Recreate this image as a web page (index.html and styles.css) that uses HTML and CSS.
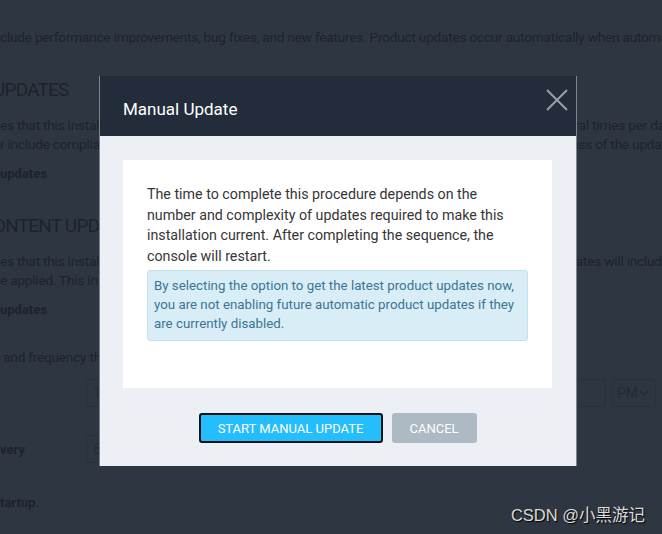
FILE: index.html
```html
<!DOCTYPE html>
<html lang="en">
<head>
<meta charset="utf-8">
<title>Manual Update</title>
<link rel="stylesheet" href="styles.css">
</head>
<body>
<main class="page">
  <p class="line l0">ty that this installation uses to keep the y protection current. / The computer ales and security provides the compliance reports</p>
  <p class="line l1">clude performance improvements, bug fixes, and new features. Product updates occur automatically when automatic updates are enabled.</p>
  <h2 class="heading h1">UPDATES</h2>
  <p class="line l2">es that this installation receives from the update server are checked for and then downloaded, several times per day</p>
  <p class="line">r include compliance content and other items. Updates are then applied to all these agents, regardless of the updates</p>
  <p class="label lb1">updates</p>
  <h2 class="heading h2">ONTENT UPDATES</h2>
  <p class="line l2">es that this installation receives as content updates are delivered to all of the agents, and these updates will include</p>
  <p class="line">e applied. This installation checks for content updates on a schedule.</p>
  <p class="label lb1">updates</p>
  <p class="line l3">&nbsp;and frequency that the installation checks for updates</p>
  <div class="form-row r1">
    <span class="form-label"></span>
    <span class="field wide">10:00</span>
    <span class="field ampm">PM<svg class="chev" viewBox="0 0 10 6" width="10" height="6"><path d="M1 1l4 4 4-4" fill="none" stroke="currentColor" stroke-width="1.2"/></svg></span>
  </div>
  <div class="form-row r2">
    <span class="form-label">very</span>
    <span class="field short">6</span>
  </div>
  <p class="label lb2">tartup.</p>
</main>

<div class="modal" role="dialog" aria-labelledby="mtitle">
  <header class="modal-header">
    <h1 id="mtitle" class="modal-title">Manual Update</h1>
    <button class="close" aria-label="Close">
      <svg viewBox="0 0 22 22" width="22" height="22"><path d="M1 1L21 21M21 1L1 21" stroke="currentColor" stroke-width="2" fill="none"/></svg>
    </button>
  </header>
  <div class="modal-body">
    <section class="panel">
      <p class="desc">The time to complete this procedure depends on the number and complexity of updates required to make this installation current. After completing the sequence, the console will restart.</p>
      <div class="alert">By selecting the option to get the latest product updates now, you are not enabling future automatic product updates if they are currently disabled.</div>
    </section>
    <div class="actions">
      <button class="btn primary">START MANUAL UPDATE</button>
      <button class="btn secondary">CANCEL</button>
    </div>
  </div>
</div>

<div class="watermark">CSDN @小黑游记</div>
</body>
</html>
```

FILE: styles.css
```css
html, body {
  margin: 0;
  padding: 0;
}
body {
  width: 662px;
  height: 534px;
  overflow: hidden;
  background: #2e3741;
  font-family: Roboto, "Liberation Sans", sans-serif;
  color: #1d232b;
  position: relative;
}
.page {
  white-space: nowrap;
  overflow: hidden;
}
.line {
  margin: 0;
  font-size: 13.7px;
  line-height: 19px;
  letter-spacing: -0.25px;
}
.l0 { margin-top: -17px; }
.l1 { margin-top: 26px; }
.l2 { margin-top: 12px; }
.l3 { margin-top: 29px; }
.heading {
  margin: 0 0 0 -7px;
  font-size: 19px;
  line-height: 28px;
  font-weight: 400;
  letter-spacing: -0.8px;
}
.h1 { margin-top: 29px; }
.h2 { margin-top: 29px; }
.label {
  margin: 10px 0 0;
  font-size: 13px;
  line-height: 19px;
  font-weight: 700;
}
.lb2 { margin-top: 30px; }
.form-row {
  display: flex;
  align-items: center;
  height: 28px;
  gap: 6px;
}
.r1 { margin-top: 12px; }
.r2 { margin-top: 28px; }
.form-label {
  width: 80px;
  font-size: 13px;
  font-weight: 700;
}
.field {
  box-sizing: border-box;
  height: 28px;
  border: 1px solid #28303a;
  border-radius: 3px;
  font-size: 14px;
  line-height: 26px;
  padding: 0 6px;
  color: #242b33;
}
.wide { width: 520px; }
.short { width: 60px; }
.ampm {
  width: 44px;
  display: flex;
  align-items: center;
  gap: 1px;
  padding: 0 4px;
}
.chev { color: #242b33; }

.modal {
  position: absolute;
  left: 100px;
  top: 76px;
  width: 476px;
  box-shadow: -1px 0 0 #7c848d, 1px 0 0 #7c848d;
  background: #eceff3;
  font-family: Roboto, "Liberation Sans", sans-serif;
}
.modal-header {
  box-sizing: border-box;
  height: 60px;
  background: #222c3a;
  display: flex;
  align-items: center;
  justify-content: space-between;
  padding: 0 8px 0 23px;
}
.modal-title {
  margin: 6px 0 0;
  font-size: 17px;
  font-weight: 400;
  color: #ffffff;
}
.close {
  background: none;
  border: 0;
  padding: 0;
  color: #9a9fa6;
  width: 22px;
  height: 22px;
  margin-top: -13px;
  display: block;
}
.close svg { display: block; }
.modal-body {
  padding: 24px 24px 23px 23px;
}
.panel {
  background: #ffffff;
  padding: 24px 24px 47px;
}
.desc {
  margin: 0 0 4px;
  font-size: 14.25px;
  line-height: 20.6px;
  color: #363636;
}
.alert {
  background: #d9edf7;
  border: 1px solid #c4e2ee;
  border-radius: 3px;
  padding: 5px 5px 7px 6px;
  font-size: 13.3px;
  line-height: 19px;
  color: #3a7596;
}
.actions {
  display: flex;
  justify-content: center;
  gap: 9px;
  margin-top: 25px;
}
.btn {
  box-sizing: border-box;
  height: 30px;
  border-radius: 3px;
  font-family: Roboto, "Liberation Sans", sans-serif;
  font-size: 13px;
  color: #ffffff;
  padding: 0;
}
.primary {
  width: 184px;
  background: #24bdfd;
  border: 2px solid #0f1318;
}
.secondary {
  width: 85px;
  background: #adb9c3;
  border: 0;
}
.watermark {
  position: absolute;
  right: 17px;
  bottom: 8px;
  font-family: "Liberation Sans", "Noto Sans CJK SC", sans-serif;
  font-size: 16.5px;
  line-height: 22px;
  color: #dcdcdc;
  text-shadow: 1px 1px 1px #000;
}
```
